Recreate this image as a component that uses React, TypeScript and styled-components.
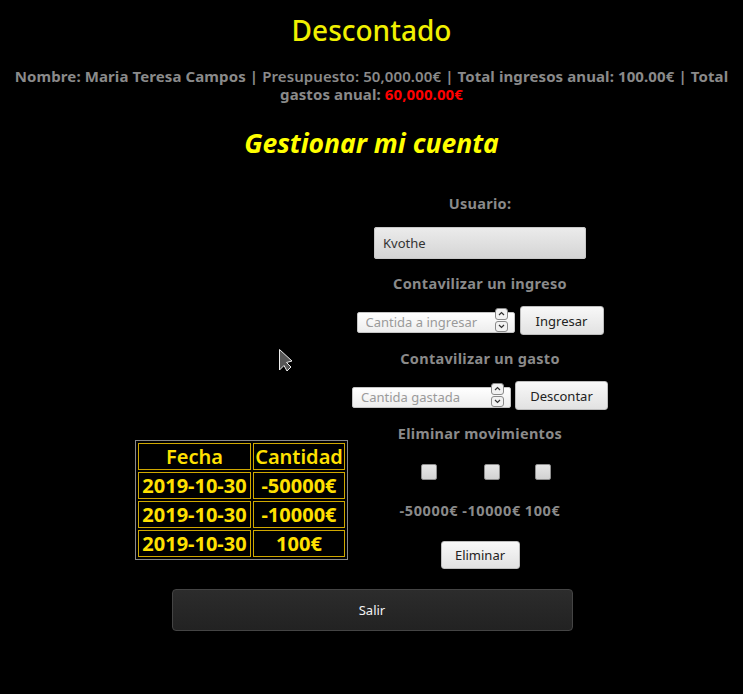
import React from "react";
import styled, { createGlobalStyle } from "styled-components";

const GlobalStyle = createGlobalStyle`
  html, body { background: #000; }
  body { margin: 8px; font-family: "Noto Sans", "Open Sans", sans-serif; }
`;

const Page = styled.div`
  position: relative;
  display: flex;
  flex-direction: column;
  align-items: center;
  text-align: center;
`;

const Title = styled.h1`
  margin: 3px 0 0;
  font-size: 28px;
  line-height: 38px;
  font-weight: 500;
  color: #f0f000;
`;

const Info = styled.p`
  margin: 18px 0 0;
  font-size: 15px;
  line-height: 18px;
  font-weight: 700;
  color: #8a8a8a;
  letter-spacing: 0.1px;
`;

const Light = styled.span`
  font-weight: 600;
`;

const Red = styled.span`
  color: #ff0000;
`;

const Subtitle = styled.h2`
  margin: 23px 0 0;
  font-size: 26.5px;
  line-height: 34px;
  font-style: italic;
  font-weight: 700;
  color: #ffff00;
`;

const Main = styled.div`
  margin-top: 34px;
  display: flex;
  align-items: flex-end;
  gap: 4px;
`;

const Table = styled.table`
  border: 1px solid #8a8a8a;
  border-spacing: 2px;
  margin-bottom: 9px;
`;

const Cell = styled.td<{ $w?: number }>`
  box-sizing: border-box;
  width: ${(p) => (p.$w ? `${p.$w}px` : "auto")};
  border: 1px solid #d0a800;
  padding: 0 1px;
  font-size: 20px;
  line-height: 25px;
  font-weight: 700;
  color: #ffe000;
  text-align: center;
  white-space: nowrap;
`;

const HeadCell = styled(Cell).attrs({ as: "th" })`
  font-weight: 600;
`;

const Form = styled.div`
  width: 256px;
  display: flex;
  flex-direction: column;
  align-items: center;
`;

const Label = styled.div<{ $top?: number }>`
  margin-top: ${(p) => p.$top ?? 0}px;
  font-size: 14.5px;
  line-height: 18px;
  font-weight: 700;
  color: #8a8a8a;
  letter-spacing: 0.3px;
`;

const TextInput = styled.input`
  box-sizing: border-box;
  margin-top: 15px;
  width: 212px;
  height: 32px;
  padding: 0 9px;
  border: none;
  border-radius: 3px;
  background: linear-gradient(#ececec, #d4d4d4);
  box-shadow: inset 0 0 0 1px #c8c8c8;
  font-family: "Noto Sans", sans-serif;
  font-size: 13px;
  color: #333;
  outline: none;
`;

const Row = styled.div<{ $gap: number }>`
  margin-top: 14px;
  display: flex;
  align-items: center;
  gap: ${(p) => p.$gap}px;
`;

const NumWrap = styled.div<{ $w: number }>`
  position: relative;
  width: ${(p) => p.$w}px;
  height: 21px;
`;

const NumInput = styled.input`
  box-sizing: border-box;
  width: 100%;
  height: 100%;
  padding: 0 8px;
  border: 1px solid #c4c4c4;
  border-radius: 2px;
  background: linear-gradient(#ffffff, #ededed);
  font-family: "Noto Sans", sans-serif;
  font-size: 13px;
  color: #333;
  outline: none;
  &::placeholder { color: #9a9a9a; }
`;

const Spinner = styled.div`
  position: absolute;
  right: 7px;
  top: -2px;
  width: 13px;
  height: 24px;
  display: flex;
  flex-direction: column;
  gap: 1px;
`;

const SpinBtn = styled.div`
  flex: 1;
  border: 1px solid #8a8a8a;
  border-radius: 3px;
  background: #f2f2f2;
  display: flex;
  align-items: center;
  justify-content: center;
`;

const Button = styled.button<{ $w: number; $h: number }>`
  width: ${(p) => p.$w}px;
  height: ${(p) => p.$h}px;
  border: 1px solid #bdbdbd;
  border-radius: 3px;
  background: linear-gradient(#f8f8f8, #e2e2e2);
  font-family: "Noto Sans", sans-serif;
  font-size: 13px;
  color: #222;
  padding: 0;
`;

const Checks = styled.div`
  margin-top: 22px;
  display: flex;
  gap: 4px;
`;

const CheckItem = styled.label`
  display: flex;
  flex-direction: column;
  align-items: center;
  gap: 21px;
  font-size: 14.5px;
  line-height: 18px;
  font-weight: 700;
  color: #8a8a8a;
  letter-spacing: 0.6px;
`;

const Box = styled.span`
  display: block;
  width: 14px;
  height: 14px;
  border: 1px solid #8e8e8e;
  border-radius: 2px;
  background: linear-gradient(#e6e6e6, #d2d2d2);
`;

const EliminarWrap = styled.div`
  margin-top: 22px;
`;

const Exit = styled.button`
  margin-top: 20px;
  margin-left: 1px;
  width: 401px;
  height: 42px;
  border: 1px solid #444;
  border-radius: 4px;
  background: linear-gradient(#2c2c2c, #222);
  color: #f4f4f4;
  font-family: "Noto Sans", sans-serif;
  font-size: 13px;
`;

const Cursor = styled.svg`
  position: absolute;
  left: 271px;
  top: 340px;
`;

const Chevron = ({ up }: { up?: boolean }) => (
  <svg width="7" height="5" viewBox="0 0 7 5">
    <path
      d={up ? "M1 4 L3.5 1.5 L6 4" : "M1 1 L3.5 3.5 L6 1"}
      stroke="#333"
      strokeWidth="1.2"
      fill="none"
    />
  </svg>
);

const NumberField = ({ w, placeholder }: { w: number; placeholder: string }) => (
  <NumWrap $w={w}>
    <NumInput placeholder={placeholder} />
    <Spinner>
      <SpinBtn>
        <Chevron up />
      </SpinBtn>
      <SpinBtn>
        <Chevron />
      </SpinBtn>
    </Spinner>
  </NumWrap>
);

const rows = [
  ["2019-10-30", "-50000€"],
  ["2019-10-30", "-10000€"],
  ["2019-10-30", "100€"],
];

export default function App() {
  return (
    <>
      <GlobalStyle />
      <Page>
        <Title>Descontado</Title>
        <Info>
          Nombre: Maria Teresa Campos | <Light>Presupuesto: 50,000.00€</Light> | Total ingresos
          anual: 100.00€ | Total gastos anual: <Red>60,000.00€</Red>
        </Info>
        <Subtitle>Gestionar mi cuenta</Subtitle>
        <Main>
          <Table>
            <thead>
              <tr>
                <HeadCell $w={113}>Fecha</HeadCell>
                <HeadCell $w={92}>Cantidad</HeadCell>
              </tr>
            </thead>
            <tbody>
              {rows.map((r, i) => (
                <tr key={i}>
                  <Cell>{r[0]}</Cell>
                  <Cell>{r[1]}</Cell>
                </tr>
              ))}
            </tbody>
          </Table>
          <Form>
            <Label>Usuario:</Label>
            <TextInput defaultValue="Kvothe" />
            <Label $top={15}>Contavilizar un ingreso</Label>
            <Row $gap={5}>
              <NumberField w={158} placeholder="Cantida a ingresar" />
              <Button $w={84} $h={29}>Ingresar</Button>
            </Row>
            <Label $top={14}>Contavilizar un gasto</Label>
            <Row $gap={4}>
              <NumberField w={159} placeholder="Cantida gastada" />
              <Button $w={93} $h={29}>Descontar</Button>
            </Row>
            <Label $top={14}>Eliminar movimientos</Label>
            <Checks>
              <CheckItem><Box />-50000€</CheckItem>
              <CheckItem><Box />-10000€</CheckItem>
              <CheckItem><Box />100€</CheckItem>
            </Checks>
            <EliminarWrap>
              <Button $w={79} $h={28}>Eliminar</Button>
            </EliminarWrap>
          </Form>
        </Main>
        <Exit>Salir</Exit>
        <Cursor width="16" height="24" viewBox="0 0 16 24">
          <path d="M8.5 9.5 L8.5 30 L13 25.5 L16 31 L20 27 L15.5 22.5 L21 21 Z" transform="translate(-8 -8)" fill="#555" stroke="#eee" strokeWidth="1" />
        </Cursor>
      </Page>
    </>
  );
}
